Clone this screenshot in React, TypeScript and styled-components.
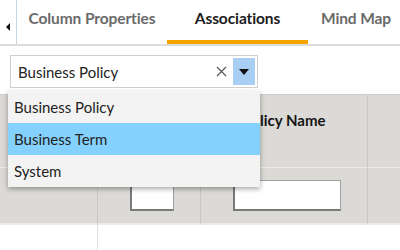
import React, { FunctionComponent } from "react";
import styled, { createGlobalStyle } from "styled-components";

const GlobalStyle = createGlobalStyle`
  html, body {
    margin: 0;
    padding: 0;
    background: #fff;
    overflow: hidden;
  }
  body {
    font-family: "Lato", "Liberation Sans", sans-serif;
  }
`;

const StyledPage = styled.div`
  position: relative;
  width: 400px;
  height: 250px;
  overflow: hidden;
`;

const StyledTabBar = styled.div`
  display: flex;
  align-items: stretch;
  height: 44px;
  overflow: hidden;
  border-bottom: 2px solid #dedede;
`;

const StyledArrowCell = styled.div`
  width: 16px;
  flex-shrink: 0;
  display: flex;
  align-items: center;
  justify-content: center;
  border-right: 1px solid #c9d6e4;
  padding-top: 10px;
`;

const StyledArrow = styled.span`
  width: 0;
  height: 0;
  border-top: 4px solid transparent;
  border-bottom: 4px solid transparent;
  border-right: 4px solid #111;
`;

const StyledTab = styled.div<{ $active?: boolean; $width: number }>`
  width: ${(p) => p.$width}px;
  flex-shrink: 0;
  display: flex;
  align-items: center;
  justify-content: center;
  font-size: 15.5px;
  font-weight: 700;
  color: ${(p) => (p.$active ? "#1c1c1c" : "#6a6a6a")};
  box-sizing: border-box;
  padding-bottom: 4px;
  border-bottom: 4px solid ${(p) => (p.$active ? "#f5a300" : "transparent")};
  letter-spacing: -0.1px;
`;

const StyledSelectRow = styled.div`
  padding: 9px 0 6px 10px;
`;

const StyledSelect = styled.div`
  width: 248px;
  height: 33px;
  box-sizing: border-box;
  border: 1px solid #cfcfcf;
  display: flex;
  align-items: center;
  padding: 0 2px 0 7px;
`;

const StyledValue = styled.span`
  flex: 1;
  font-size: 15px;
  color: #222;
`;

const StyledClear = styled.span`
  width: 20px;
  display: flex;
  justify-content: center;
  margin-right: 2px;
`;

const StyledToggle = styled.span`
  width: 22px;
  height: 27px;
  background: #a9cef4;
  display: flex;
  align-items: center;
  justify-content: center;
`;

const StyledCaret = styled.span`
  width: 0;
  height: 0;
  border-left: 5px solid transparent;
  border-right: 5px solid transparent;
  border-top: 6px solid #111;
`;

const StyledTable = styled.div`
  display: grid;
  grid-template-columns: 98px 103px 167px 1fr;
  grid-template-rows: 73px 57px 30px;
  border-top: 1px solid #cfcccc;
`;

const StyledCell = styled.div<{ $kind: "head" | "filter" | "body"; $line?: boolean }>`
  display: flex;
  align-items: center;
  justify-content: center;
  background: ${(p) => (p.$kind === "body" ? "#fff" : "#dcdad6")};
  border-right: 1px solid ${(p) => (p.$line ? (p.$kind === "body" ? "#e2dede" : "#cbc5c5") : "transparent")};
  border-bottom: ${(p) =>
    p.$kind === "head" ? "1px solid #ecebe9" : p.$kind === "filter" ? "2px solid #ecebe9" : "none"};
  font-size: 15px;
  font-weight: 700;
  color: #151515;
  padding-bottom: ${(p) => (p.$kind === "head" ? "22px" : "0")};
  padding-left: ${(p) => (p.$kind === "filter" ? "6px" : "0")};
`;

const StyledInput = styled.div<{ $width: number }>`
  width: ${(p) => p.$width}px;
  height: 31px;
  box-sizing: border-box;
  background: #fff;
  border: 1px solid #a0a0a0;
  border-left: 2px solid #7a7a7a;
  border-bottom: 2px solid #7a7a7a;
`;

const StyledMenu = styled.ul`
  position: absolute;
  left: 8px;
  top: 91px;
  width: 252px;
  margin: 0;
  padding: 0;
  list-style: none;
  background: #f3f3f3;
  box-shadow: 0 2px 5px rgba(0, 0, 0, 0.35);
`;

const StyledOption = styled.li<{ $selected?: boolean }>`
  height: 32px;
  display: flex;
  align-items: center;
  padding-left: 6px;
  font-size: 15px;
  color: #222;
  background: ${(p) => (p.$selected ? "#85d1fe" : "transparent")};
`;

const options = ["Business Policy", "Business Term", "System"];

const App: FunctionComponent = () => {
  return (
    <StyledPage>
      <GlobalStyle />
      <StyledTabBar>
        <StyledArrowCell>
          <StyledArrow />
        </StyledArrowCell>
        <StyledTab $width={150}>Column Properties</StyledTab>
        <StyledTab $width={141} $active>
          Associations
        </StyledTab>
        <StyledTab $width={96}>Mind Map</StyledTab>
      </StyledTabBar>

      <StyledSelectRow>
        <StyledSelect>
          <StyledValue>Business Policy</StyledValue>
          <StyledClear>
            <svg width="11" height="11" viewBox="0 0 11 11">
              <path d="M1 1 L10 10 M10 1 L1 10" stroke="#555" strokeWidth="1.2" fill="none" />
            </svg>
          </StyledClear>
          <StyledToggle>
            <StyledCaret />
          </StyledToggle>
        </StyledSelect>
      </StyledSelectRow>

      <StyledTable>
        <StyledCell $kind="head" $line />
        <StyledCell $kind="head" $line />
        <StyledCell $kind="head" $line>
          Policy Name
        </StyledCell>
        <StyledCell $kind="head" />
        <StyledCell $kind="filter" $line />
        <StyledCell $kind="filter" $line>
          <StyledInput $width={44} />
        </StyledCell>
        <StyledCell $kind="filter" $line>
          <StyledInput $width={108} />
        </StyledCell>
        <StyledCell $kind="filter" />
        <StyledCell $kind="body" $line />
        <StyledCell $kind="body" />
        <StyledCell $kind="body" />
        <StyledCell $kind="body" />
      </StyledTable>

      <StyledMenu>
        {options.map((o) => (
          <StyledOption key={o} $selected={o === "Business Term"}>
            {o}
          </StyledOption>
        ))}
      </StyledMenu>
    </StyledPage>
  );
};

export default App;
